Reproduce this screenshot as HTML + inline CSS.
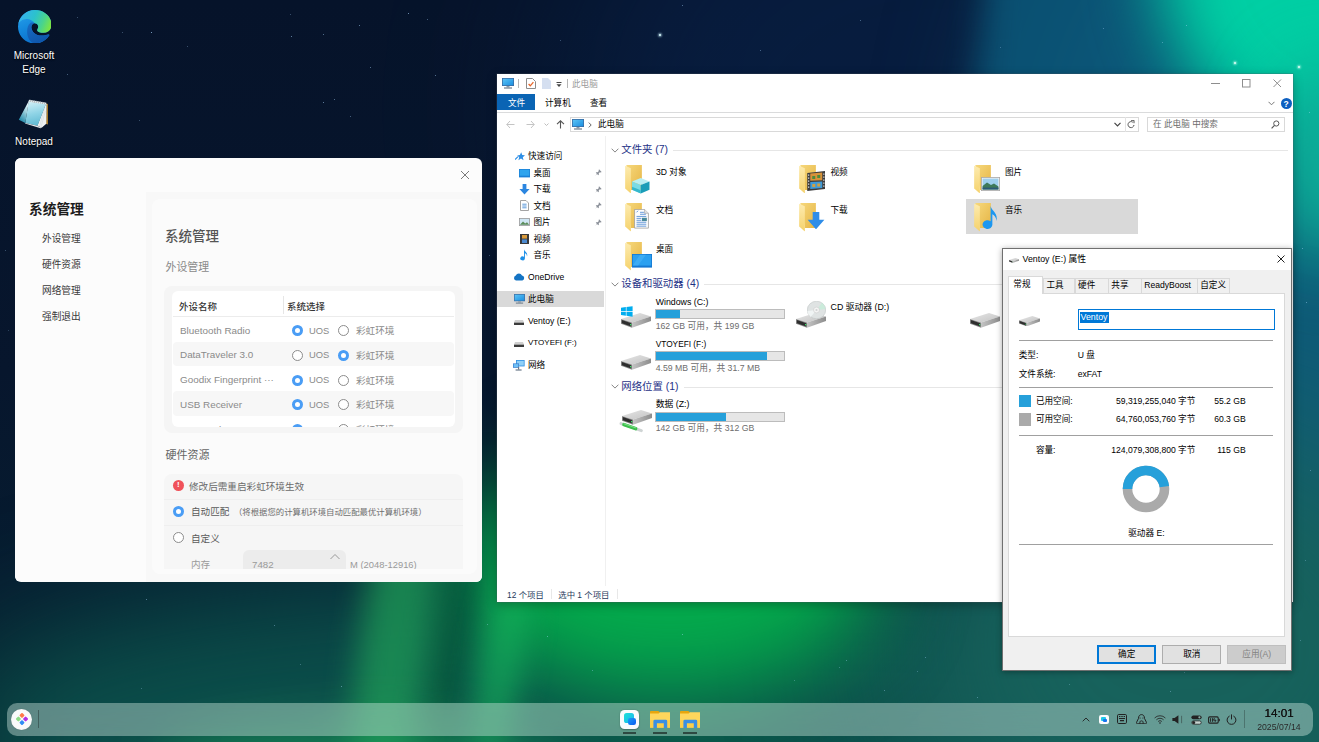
<!DOCTYPE html>
<html lang="zh-CN">
<head>
<meta charset="utf-8">
<title>Desktop</title>
<style>
*{box-sizing:border-box;margin:0;padding:0}
html,body{width:1319px;height:742px;overflow:hidden;background:#07152b}
body{position:relative;font-family:"Liberation Sans","Noto Sans CJK SC",sans-serif;font-size:10px;color:#000}
.abs{position:absolute}
.t{position:absolute;white-space:nowrap;line-height:1}
#bg{position:absolute;left:0;top:0;width:1319px;height:742px;overflow:hidden;
background:linear-gradient(to bottom,#06132a 0%,#07162d 50%,#061c30 78%,#06222f 100%)}
#bg i{position:absolute;display:block;border-radius:50%}

#uos{color:#333}
#uos .side{position:absolute;left:0;top:0;width:131px;height:423px;background:#fcfcfc}
#uos .main{position:absolute;left:131px;top:34px;width:337px;height:390px;background:#f8f8f8}
#uos .card{position:absolute;left:6px;top:7px;width:325px;height:375px;background:#fbfbfb;border-radius:8px}
#uos .m{font-size:9.7px;color:#3a3a3a;left:27px;margin-top:2px}
.rd{position:absolute;width:11px;height:11px;border-radius:50%;border:1px solid #8c8c8c;background:#fff}
.rd.on{border:3px solid #4a9df5;background:#fff}
.row{position:absolute;left:1px;width:281px;height:24.6px;border-radius:4px}
.row.alt{background:#f7f7f7}
.row .t{top:9px;font-size:9.6px;color:#8a8a8a}
.row .rd{top:8px}
.row .l{font-size:9.9px;top:8.5px}

#exp{font-size:9px;color:#000}
#exp .t{font-size:9px}
#exp .sb{left:31px;color:#000}
#exp .h{font-size:10.4px;color:#1e3287;margin-top:1.2px}
#exp .g{color:#6d6d6d;font-size:8.7px}
.bar{position:absolute;height:10px;border:1px solid #bcbcbc;background:#e6e6e6;width:130px}
.bar b{position:absolute;left:0;top:0;height:8px;background:#26a0da}
.hl{position:absolute;height:1px;background:#e6e6e6}

#prop{font-size:8.6px;color:#000}
#prop .t{font-size:8.6px}
#prop .tab{position:absolute;top:29px;height:15px;border:1px solid #d9d9d9;border-bottom:none;background:#f0f0f0}
#prop .sep{position:absolute;left:15.7px;width:254.5px;height:1px;background:#a0a0a0}
#prop .btn{position:absolute;top:395.5px;height:19px;width:59px;border:1px solid #adadad;background:#e1e1e1}
#expb .t{margin-top:.7px}
#expb .h{margin-top:1.3px}
</style>
</head>
<body>
<div id="bg">
<i style="left:560px;top:-200px;width:760px;height:620px;background:#0a2a5c;filter:blur(90px);opacity:.4"></i>
<i style="left:1020px;top:-120px;width:460px;height:900px;background:#0e5a78;filter:blur(70px);border-radius:40%"></i><i style="left:983px;top:-90px;width:400px;height:230px;background:#0b5779;filter:blur(16px);border-radius:10%;transform:skewX(-6deg);opacity:.85"></i>
<i style="left:1160px;top:-250px;width:360px;height:400px;background:#00cfa4;filter:blur(34px);transform:rotate(12deg)"></i><i style="left:1270px;top:60px;width:120px;height:200px;background:#0cae98;filter:blur(34px)"></i>
<i style="left:-40px;top:575px;width:1460px;height:330px;background:#0b4e4a;filter:blur(60px);border-radius:40%"></i>
<i style="left:900px;top:420px;width:560px;height:460px;background:#17625c;filter:blur(80px)"></i>
<i style="left:460px;top:440px;width:420px;height:256px;background:#04aa4c;filter:blur(42px)"></i><i style="left:425px;top:560px;width:40px;height:200px;background:#075a3c;filter:blur(14px);transform:rotate(8deg);opacity:.8"></i><i style="left:478px;top:560px;width:46px;height:200px;background:#18c060;filter:blur(14px);transform:rotate(9deg);opacity:.55"></i>
<i style="left:360px;top:430px;width:70px;height:420px;background:#20a058;filter:blur(15px);transform:rotate(7deg);opacity:.7"></i>
<i style="left:150px;top:722px;width:420px;height:90px;background:#1c9a58;filter:blur(24px);opacity:.6"></i>
<b class="abs" style="left:0;top:0;width:1.3px;height:1.3px;border-radius:50%;box-shadow:151px 32px 0 0 rgba(170,215,255,0.90),291px 36px 0 0 rgba(170,215,255,0.70),323px 34px 0 0 rgba(170,215,255,0.60),359px 25px 0 0 rgba(170,215,255,0.70),408px 13px 0 0 rgba(170,215,255,0.80),370px 67px 0 0 rgba(170,215,255,0.60),435px 75px 0 0 rgba(170,215,255,0.60),323px 102px 0 0 rgba(170,215,255,0.70),334px 99px 0 0 rgba(170,215,255,0.60),350px 116px 0 0 rgba(170,215,255,0.50),187px 46px 0 0 rgba(170,215,255,0.40),67px 74px 0 0 rgba(170,215,255,0.50),139px 120px 0 0 rgba(170,215,255,0.40),682px 5px 0 0 rgba(170,215,255,0.60),290px 14px 0 0 rgba(170,215,255,0.40),427px 19px 0 0 rgba(170,215,255,0.50),77px 17px 0 0 rgba(170,215,255,0.40),122px 32px 0 0 rgba(170,215,255,0.40),1186px 25px 0 0 rgba(170,215,255,0.60),1162px 42px 0 0 rgba(170,215,255,0.50),1103px 28px 0 0 rgba(170,215,255,0.50),1309px 112px 0 0 rgba(170,215,255,0.60),146px 599px 0 0 rgba(170,215,255,0.60),274px 625px 0 0 rgba(170,215,255,0.50),341px 686px 0 0 rgba(170,215,255,0.60),547px 636px 0 0 rgba(170,215,255,0.60),592px 670px 0 0 rgba(170,215,255,0.50),487px 624px 0 0 rgba(170,215,255,0.50),300px 664px 0 0 rgba(170,215,255,0.40),141px 688px 0 0 rgba(170,215,255,0.40),682px 634px 0 0 rgba(170,215,255,0.60),925px 657px 0 0 rgba(170,215,255,0.50),846px 660px 0 0 rgba(170,215,255,0.50),839px 667px 0 0 rgba(170,215,255,0.40),917px 671px 0 0 rgba(170,215,255,0.40),794px 680px 0 0 rgba(170,215,255,0.40),884px 690px 0 0 rgba(170,215,255,0.50),977px 697px 0 0 rgba(170,215,255,0.50),1170px 691px 0 0 rgba(170,215,255,0.50),1184px 672px 0 0 rgba(170,215,255,0.40),1069px 684px 0 0 rgba(170,215,255,0.40),560px 40px 0 0 rgba(170,215,255,0.40),760px 50px 0 0 rgba(170,215,255,0.50),905px 75px 0 0 rgba(170,215,255,0.40),860px 20px 0 0 rgba(170,215,255,0.50),1000px 47px 0 0 rgba(170,215,255,0.40),5px 250px 0 0 rgba(170,215,255,0.40),8px 330px 0 0 rgba(170,215,255,0.30),1302px 248px 0 0 rgba(170,215,255,0.60),1306px 302px 0 0 rgba(170,215,255,0.60),1310px 470px 0 0 rgba(170,215,255,0.50),1305px 560px 0 0 rgba(170,215,255,0.40),1300px 640px 0 0 rgba(170,215,255,0.40),489px 255px 0 0 rgba(170,215,255,0.40)"></b><b class="abs" style="left:659px;top:34px;width:2px;height:2px;background:#dff;border-radius:50%;box-shadow:0 0 2px 1px rgba(200,240,255,.6)"></b><b class="abs" style="left:1234px;top:62px;width:2px;height:2px;background:#dffff4;border-radius:50%;box-shadow:0 0 2px 1px rgba(200,255,240,.6)"></b><b class="abs" style="left:1298px;top:66px;width:2px;height:2px;background:#dffff4;border-radius:50%;box-shadow:0 0 2px 1px rgba(200,255,240,.6)"></b>
</div>

<svg width="0" height="0" style="position:absolute">
<defs>
<linearGradient id="gFb" x1="0" y1="0" x2="1" y2="1"><stop offset="0" stop-color="#f6d87c"/><stop offset="1" stop-color="#e6b545"/></linearGradient>
<linearGradient id="gFf" x1="0" y1="0" x2="0" y2="1"><stop offset="0" stop-color="#fdebaf"/><stop offset="1" stop-color="#f5d26c"/></linearGradient>
<linearGradient id="gDr" x1="0" y1="0" x2="1" y2="0"><stop offset="0" stop-color="#c4c4c4"/><stop offset="1" stop-color="#8c8c8c"/></linearGradient>
<linearGradient id="gDt" x1="0" y1="0" x2="1" y2="1"><stop offset="0" stop-color="#e6e6e6"/><stop offset="1" stop-color="#c2c2c2"/></linearGradient>
<linearGradient id="gPc" x1="0" y1="0" x2="1" y2="1"><stop offset="0" stop-color="#5cc3f5"/><stop offset="1" stop-color="#1c8fe0"/></linearGradient>
<symbol id="folder" viewBox="0 0 17 29"><path d="M1.2 0H17V25.5H6Z" fill="url(#gFb)"/><path d="M0 0.8L5.8 3.2V29L0 23.8Z" fill="url(#gFf)"/></symbol>
<symbol id="drive" viewBox="0 0 30 15"><path d="M0 6L19 0L30 3.4L11 9.6Z" fill="url(#gDt)"/><path d="M0 6L11 9.6V14.8L0 10.8Z" fill="#8a8a8a"/><path d="M0.9 7.1L10.2 10.2V13.6L0.9 10.2Z" fill="#2e2e2e"/><path d="M11 9.6L30 3.4V7.9L11 14.8Z" fill="url(#gDr)"/><rect x="9" y="11" width="1.3" height="1.3" fill="#3fe06a"/></symbol>
<symbol id="pc" viewBox="0 0 12 11"><rect x="0" y="0" width="12" height="8" fill="#3a6ea5"/><rect x="0.8" y="0.8" width="10.4" height="6.4" fill="url(#gPc)"/><rect x="4.5" y="8" width="3" height="1.4" fill="#8e9aa6"/><rect x="2" y="9.4" width="8" height="1.2" fill="#6f7f8f"/></symbol>
<symbol id="pin" viewBox="0 0 8 8"><path d="M4.6 0.4L7.6 3.4L6.6 3.9L5.6 3.6L4.3 4.9L4.4 6.6L3.6 7.1L2.4 5.6L0.4 7.6L2.1 5.3L0.9 4.4L1.4 3.6L3.1 3.7L4.4 2.4L4.1 1.4Z" fill="#8a8f98"/></symbol>
</defs></svg>
<!-- DESKTOP ICONS -->
<div id="desk">
<svg class="abs" style="left:17.8px;top:9.6px" width="33.6" height="33.7" viewBox="0 0 33.6 33.7">
<defs><linearGradient id="e0" x1="0" y1="0" x2=".4" y2="1"><stop offset="0" stop-color="#2aa4ee"/><stop offset=".55" stop-color="#1488dc"/><stop offset="1" stop-color="#0c70cc"/></linearGradient>
<linearGradient id="e1" x1="0" y1=".3" x2="1" y2=".6"><stop offset="0" stop-color="#36b0f2"/><stop offset=".45" stop-color="#2cc2cc"/><stop offset=".75" stop-color="#4ad48c"/><stop offset="1" stop-color="#7ce444"/></linearGradient>
<linearGradient id="e2" x1="0" y1="0" x2=".6" y2="1"><stop offset="0" stop-color="#186cc4"/><stop offset="1" stop-color="#0e55aa"/></linearGradient></defs>
<path d="M17 0C26.4 0 33.6 6.8 33.6 15C33.6 19.6 30 22.8 25.6 22.8C22.4 22.8 19.6 21.8 19.2 20.4C19 19.2 20.4 18.4 20.2 16.4C20 14.4 18.4 13.2 16.8 13.2C14.6 13.2 13.2 15.2 13.4 17.8C13.8 22.2 18 25.6 23 25.6C26 25.6 28.6 25 30.6 24.6C31.2 24.5 31.6 25 31.2 25.6C28.4 30.4 23 33.6 17 33.6C7.6 33.6 0 26 0 16.8C0 7.6 7.6 0 17 0Z" fill="url(#e0)"/>
<path d="M.4 14C1.6 6 8.6 0 17 0C26.4 0 33.6 6.8 33.6 15C33.6 19.6 30 22.8 25.6 22.8C22.4 22.8 19.6 21.8 19.2 20.4C19 19.2 20.4 18.4 20.2 16.4C20 14.4 18.4 13.2 16.8 13.2C15 10.4 11.6 8.8 8.6 8.9C5 9 1.6 11 .4 14Z" fill="url(#e1)"/>
<path d="M16.8 13.2C15 12.4 13.4 12.4 12.4 13C10 14.6 9 18.4 9.1 22.2C9.3 27 11.6 31.4 15 32.9C17 33.5 19.6 33.4 22 32.6C26 31.3 29.4 28.6 31.2 25.6C31.6 25 31.2 24.5 30.6 24.6C28.6 25 26 25.6 23 25.6C18 25.6 13.8 22.2 13.4 17.8C13.2 15.2 14.6 13.2 16.8 13.2Z" fill="url(#e2)"/>
</svg>
<div class="t" style="left:4px;top:50.5px;width:60px;text-align:center;font-size:10px;color:#fff;text-shadow:0 1px 1.5px rgba(0,0,0,.9),0 0 1px rgba(0,0,0,.7)">Microsoft</div>
<div class="t" style="left:4px;top:64.7px;width:60px;text-align:center;font-size:10px;color:#fff;text-shadow:0 1px 1.5px rgba(0,0,0,.9),0 0 1px rgba(0,0,0,.7)">Edge</div>
<svg class="abs" style="left:18px;top:99px" width="31" height="30" viewBox="0 0 31 30">
<defs><linearGradient id="n1" x1=".3" y1="0" x2=".5" y2="1"><stop offset="0" stop-color="#cdeef6"/><stop offset=".5" stop-color="#8fd4e6"/><stop offset="1" stop-color="#5fb9d2"/></linearGradient>
<linearGradient id="n2" x1=".7" y1="0" x2=".3" y2="1"><stop offset="0" stop-color="#f2fafc"/><stop offset=".45" stop-color="#9ccfdc"/><stop offset="1" stop-color="#1d86a6"/></linearGradient></defs>
<path d="M28.5 4.2L29.9 5.2V25.6L28.2 24.9Z" fill="#c48c2a"/>
<path d="M28 4.6L28.6 5.2L28.3 24.8L23.7 28.7L19.4 26.6Z" fill="#eef1f2"/>
<path d="M26.6 9L21.6 27.4M27.4 12L23 28" stroke="#cfd6d8" stroke-width=".5"/>
<path d="M10.6 2.6L28 4.8L19.6 26.7L7.3 23.9Z" fill="url(#n1)"/>
<path d="M11 1.4L10.2 6L7.3 23.9L.8 20.7Z" fill="url(#n2)"/>
<path d="M7.3 23.9L19.6 26.7L23.7 28.7L22.6 29.2L7 24.6Z" fill="#e4e9ea"/>
<path d="M11 .8L28.4 3.8L28 5.4L10.6 2.8Z" fill="#e6ecee"/>
<path d="M12.4 .7V2.9M14.4 1V3.2M16.4 1.4V3.6M18.4 1.7V3.9M20.4 2.1V4.3M22.4 2.4V4.6M24.4 2.8V5M26.4 3.1V5.3" stroke="#98a4a8" stroke-width=".7"/>
</svg>
<div class="t" style="left:4px;top:137.3px;width:60px;text-align:center;font-size:10px;color:#fff;text-shadow:0 1px 1.5px rgba(0,0,0,.9),0 0 1px rgba(0,0,0,.7)">Notepad</div>
</div>

<!-- UOS WINDOW -->
<div id="uos" class="abs" style="left:15px;top:158px;width:467.3px;height:423.7px;background:#fcfcfc;border-radius:6px;overflow:hidden">
<div class="side">
<div class="t" style="left:14px;top:44.8px;font-size:13.7px;font-weight:bold;color:#1c1c1c">系统管理</div>
<div class="t m" style="top:74px">外设管理</div>
<div class="t m" style="top:100px">硬件资源</div>
<div class="t m" style="top:126px">网络管理</div>
<div class="t m" style="top:152px">强制退出</div>
</div>
<svg class="abs" style="left:445px;top:12px" width="10" height="10" viewBox="0 0 10 10"><path d="M1 1L9 9M9 1L1 9" stroke="#7a7a7a" stroke-width="1" fill="none"/></svg>
<div class="main"><div class="card">
<div class="t" style="left:13px;top:31px;font-size:13.5px;color:#555;font-weight:500">系统管理</div>
<div class="t" style="left:13.5px;top:62.5px;font-size:10.9px;color:#8a8a8a">外设管理</div>
<div class="abs" style="left:12px;top:87px;width:299px;height:147px;background:#f5f5f5;border-radius:8px"></div>
<div class="abs" id="tbl" style="left:20px;top:92px;width:283px;height:136px;background:#fff;border-radius:6px;overflow:hidden">
<div class="t" style="left:7px;top:10.5px;font-size:9.5px;color:#333;font-weight:500">外设名称</div>
<div class="t" style="left:115px;top:10.5px;font-size:9.5px;color:#333;font-weight:500">系统选择</div>
<div class="abs" style="left:111px;top:5px;width:1px;height:18px;background:#e6e6e6"></div>
<div class="abs" style="left:1px;top:25px;width:281px;height:1px;background:#ececec"></div>
<div class="row" style="top:26px"><span class="t l" style="left:7px">Bluetooth Radio</span><b class="rd on" style="left:119px;"></b><span class="t l" style="left:136px;font-size:9.4px">UOS</span><b class="rd" style="left:165px;"></b><span class="t" style="left:183px">彩虹环境</span></div>
<div class="row alt" style="top:50.8px"><span class="t l" style="left:7px">DataTraveler 3.0</span><b class="rd" style="left:119px;"></b><span class="t l" style="left:136px;font-size:9.4px">UOS</span><b class="rd on" style="left:165px;"></b><span class="t" style="left:183px">彩虹环境</span></div>
<div class="row" style="top:75.6px"><span class="t l" style="left:7px">Goodix Fingerprint ···</span><b class="rd on" style="left:119px;"></b><span class="t l" style="left:136px;font-size:9.4px">UOS</span><b class="rd" style="left:165px;"></b><span class="t" style="left:183px">彩虹环境</span></div>
<div class="row alt" style="top:100.4px"><span class="t l" style="left:7px">USB Receiver</span><b class="rd on" style="left:119px;"></b><span class="t l" style="left:136px;font-size:9.4px">UOS</span><b class="rd" style="left:165px;"></b><span class="t" style="left:183px">彩虹环境</span></div>
<div class="row" style="top:125.2px"><span class="t l" style="left:17px">VIA Labs, Inc.</span><b class="rd on" style="left:119px;"></b><span class="t l" style="left:136px;font-size:9.4px">UOS</span><b class="rd" style="left:165px;"></b><span class="t" style="left:183px">彩虹环境</span></div>
</div>
<div class="t" style="left:13.5px;top:250.5px;font-size:11px;color:#666">硬件资源</div>
<div class="abs" id="hw" style="left:12px;top:275px;width:299px;height:95px;background:#f6f6f6;border-radius:8px 8px 0 0;overflow:hidden">
<div class="abs" style="left:0;top:25px;width:299px;height:1px;background:#efefef"></div>
<div class="abs" style="left:0;top:51px;width:299px;height:1px;background:#efefef"></div>
<div class="abs" style="left:9px;top:6px;width:11px;height:11px;border-radius:50%;background:#f0525a"></div>
<div class="t" style="left:13px;top:7px;font-size:8px;color:#fff;font-weight:bold">!</div>
<div class="t" style="left:25px;top:8px;font-size:9.6px;color:#6a6a6a">修改后需重启彩虹环境生效</div>
<b class="rd on" style="left:9px;top:32px"></b>
<div class="t" style="left:27px;top:33px;font-size:9.6px;color:#5a5a5a">自动匹配</div>
<div class="t" style="left:70px;top:34px;font-size:8.4px;color:#6e6e6e">（将根据您的计算机环境自动匹配最优计算机环境）</div>
<b class="rd" style="left:9px;top:58px"></b>
<div class="t" style="left:27px;top:60px;font-size:9.6px;color:#5a5a5a">自定义</div>
<div class="t" style="left:27px;top:85.5px;font-size:9.6px;color:#9a9a9a">内存</div>
<div class="abs" style="left:79px;top:76px;width:103px;height:40px;background:#ececec;border-radius:6px"></div>
<div class="t" style="left:88px;top:86px;font-size:9.7px;color:#9a9a9a">7482</div>
<svg class="abs" style="left:165px;top:79px" width="12" height="8" viewBox="0 0 12 8"><path d="M1.5 6L6 1.5L10.5 6" stroke="#999" stroke-width="1" fill="none"/></svg>
<div class="t" style="left:186px;top:86px;font-size:9.4px;color:#9a9a9a">M (2048-12916)</div>
</div>
</div></div>
</div>

<!-- EXPLORER WINDOW -->
<div id="exp" class="abs" style="left:497px;top:74px;width:796px;height:528px;background:#fff;overflow:hidden;box-shadow:0 0 0 .5px rgba(80,90,100,.5),0 3px 10px rgba(0,0,0,.28)">
<!-- titlebar -->
<svg class="abs" style="left:5px;top:4px" width="12" height="11"><use href="#pc"/></svg>
<div class="abs" style="left:21px;top:5px;width:1px;height:9px;background:#b5b5b5"></div>
<svg class="abs" style="left:29px;top:4px" width="10" height="11" viewBox="0 0 10 11"><path d="M0.5 0.5H6.5L9.5 3.5V10.5H0.5Z" fill="#fff" stroke="#8c8c8c" stroke-width="1"/><path d="M2.6 6L4.3 7.8L7.4 4.2" stroke="#e8682c" stroke-width="1.3" fill="none"/></svg>
<svg class="abs" style="left:45px;top:4px" width="9" height="11" viewBox="0 0 9 11"><path d="M0 0H6L9 3V11H0Z" fill="#d5dff0"/></svg>
<svg class="abs" style="left:59px;top:8px" width="6" height="6" viewBox="0 0 6 6"><rect x="0.5" y="0" width="5" height="1" fill="#444"/><path d="M0.5 2.2H5.5L3 5Z" fill="#444"/></svg>
<div class="abs" style="left:70px;top:5px;width:1px;height:9px;background:#b5b5b5"></div>
<div class="t" style="left:75px;top:5.5px;font-size:8.6px;color:#9a9a9a">此电脑</div>
<svg class="abs" style="left:714px;top:9px" width="9" height="1"><rect width="9" height="1" fill="#8e8e8e"/></svg>
<svg class="abs" style="left:745px;top:5px" width="9" height="9" viewBox="0 0 9 9"><rect x="0.5" y="0.5" width="7.5" height="7.5" fill="none" stroke="#8e8e8e" stroke-width="1"/></svg>
<svg class="abs" style="left:776px;top:5px" width="9" height="9" viewBox="0 0 9 9"><path d="M0.5 0.5L8 8M8 0.5L0.5 8" stroke="#8e8e8e" stroke-width="1" fill="none"/></svg>
<!-- ribbon tabs -->
<div class="abs" style="left:0;top:20px;width:38px;height:16px;background:#0a64b4"></div>
<div class="t" style="left:11px;top:25.3px;color:#fff;font-size:8.6px">文件</div>
<div class="t" style="left:48px;top:25.3px;font-size:8.6px">计算机</div>
<div class="t" style="left:93px;top:25.3px;font-size:8.6px">查看</div>
<svg class="abs" style="left:771px;top:27px" width="7" height="5" viewBox="0 0 7 5"><path d="M0.5 0.8L3.5 3.8L6.5 0.8" stroke="#777" stroke-width="1" fill="none"/></svg>
<div class="abs" style="left:783.5px;top:24px;width:11px;height:11px;border-radius:50%;background:#0d5fc0"></div>
<div class="t" style="left:786.6px;top:25.5px;font-size:8.5px;font-weight:bold;color:#fff">?</div>
<div class="hl" style="left:0;top:38px;width:796px;background:#dadbdc"></div>
<!-- nav row -->
<svg class="abs" style="left:9px;top:46px" width="60" height="9" viewBox="0 0 60 9"><path d="M8.5 4.5H0.8M4 1L0.8 4.5L4 8" stroke="#c4c4c4" stroke-width="1" fill="none"/><path d="M20.5 4.5H28.2M25 1L28.2 4.5L25 8" stroke="#c4c4c4" stroke-width="1" fill="none"/><path d="M38.5 3.5L40.5 5.5L42.5 3.5" stroke="#bdbdbd" stroke-width="1" fill="none"/><path d="M54.5 8.6V0.9M51 4.2L54.5 0.8L58 4.2" stroke="#555" stroke-width="1.1" fill="none"/></svg>
<div class="abs" style="left:73px;top:42.5px;width:569px;height:15.5px;border:1px solid #d9d9d9;background:#fff"></div>
<svg class="abs" style="left:75px;top:45px" width="12" height="11"><use href="#pc"/></svg>
<svg class="abs" style="left:91px;top:48px" width="4" height="6" viewBox="0 0 4 6"><path d="M0.8 0.6L3.2 3L0.8 5.4" stroke="#555" stroke-width=".9" fill="none"/></svg>
<div class="t" style="left:101px;top:46px;font-size:8.6px">此电脑</div>
<svg class="abs" style="left:617px;top:48px" width="7" height="5" viewBox="0 0 7 5"><path d="M0.5 0.8L3.5 3.8L6.5 0.8" stroke="#444" stroke-width="1.2" fill="none"/></svg>
<div class="abs" style="left:627.5px;top:43px;width:1px;height:14.5px;background:#e3e3e3"></div>
<svg class="abs" style="left:630px;top:46px" width="8" height="9" viewBox="0 0 8 9"><path d="M5.8 2.2A3 3 0 1 0 7 5" stroke="#555" stroke-width="1" fill="none"/><path d="M4 0.3H7V3.2" stroke="#555" stroke-width="1" fill="none"/></svg>
<div class="abs" style="left:649.5px;top:42.5px;width:138.5px;height:15.5px;border:1px solid #d9d9d9;background:#fff"></div>
<div class="t" style="left:656px;top:46px;font-size:8.6px;color:#6d6d6d">在 此电脑 中搜索</div>
<svg class="abs" style="left:774px;top:46px" width="9" height="9" viewBox="0 0 9 9"><circle cx="5.3" cy="3.5" r="2.6" stroke="#555" stroke-width="1" fill="none"/><path d="M3.5 5.4L0.6 8.3" stroke="#555" stroke-width="1.2"/></svg>
<div id="expb">
<div class="abs" style="left:108px;top:62px;width:1px;height:450px;background:#f0f0f0"></div>
<div class="abs" style="left:0;top:217px;width:107px;height:16.3px;background:#d9d9d9"></div>
<div class="t" style="left:31px;top:77.4px;font-size:8.6px">快速访问</div>
<div class="t" style="left:36.5px;top:93.9px;font-size:8.6px">桌面</div>
<div class="t" style="left:36.5px;top:110.4px;font-size:8.6px">下载</div>
<div class="t" style="left:36.5px;top:127.1px;font-size:8.6px">文档</div>
<div class="t" style="left:36.5px;top:143.4px;font-size:8.6px">图片</div>
<div class="t" style="left:36.5px;top:159.9px;font-size:8.6px">视频</div>
<div class="t" style="left:36.5px;top:176.1px;font-size:8.6px">音乐</div>
<div class="t" style="left:31px;top:198.4px;font-size:8.6px">OneDrive</div>
<div class="t" style="left:31px;top:220.3px;font-size:8.6px">此电脑</div>
<div class="t" style="left:31px;top:242.6px;font-size:8.6px">Ventoy (E:)</div>
<div class="t" style="left:31px;top:264.7px;font-size:8px">VTOYEFI (F:)</div>
<div class="t" style="left:31px;top:286.5px;font-size:8.6px">网络</div>
<svg class="abs" style="left:98px;top:95.0px" width="7" height="7"><use href="#pin"/></svg>
<svg class="abs" style="left:98px;top:111.5px" width="7" height="7"><use href="#pin"/></svg>
<svg class="abs" style="left:98px;top:128.2px" width="7" height="7"><use href="#pin"/></svg>
<svg class="abs" style="left:98px;top:144.5px" width="7" height="7"><use href="#pin"/></svg>
<svg class="abs" style="left:17.5px;top:77.5px" width="10" height="9" viewBox="0 0 10 9"><path d="M6.2 0.2L7.2 3L10 3.3L7.8 5.2L8.5 8.2L6 6.6L3.4 8.2L4.2 5.3L2.2 3.4L4.9 3.1Z" fill="#2e8fe6"/><path d="M0 7.6L3 4.6" stroke="#2e8fe6" stroke-width="1.2"/></svg>
<svg class="abs" style="left:22px;top:94.5px" width="11" height="9" viewBox="0 0 11 9"><rect width="11" height="8.4" fill="#1a80d6"/><rect x=".7" y=".7" width="9.6" height="6" fill="#2fa4ee"/></svg>
<svg class="abs" style="left:22px;top:109.5px" width="11" height="11" viewBox="0 0 11 11"><path d="M3.6 0H7.4V5H10.6L5.5 10.6L0.4 5H3.6Z" fill="#2b86e0"/></svg>
<svg class="abs" style="left:23px;top:126.19999999999999px" width="9" height="11" viewBox="0 0 9 11"><path d="M0.5 0.5H6L8.5 3V10.5H0.5Z" fill="#fff" stroke="#9a9a9a" stroke-width=".9"/><path d="M2.3 4.2H6.6M2.3 6H6.6M2.3 7.8H6.6" stroke="#4c8fd6" stroke-width=".9"/></svg>
<svg class="abs" style="left:22px;top:144px" width="11" height="8" viewBox="0 0 11 8"><rect x=".4" y=".4" width="10.2" height="7.2" fill="#cfe6f4" stroke="#9a9a9a" stroke-width=".8"/><path d="M0.9 6.8L4 3.6L6.2 5.4L8 4.2L10.2 6.8Z" fill="#5b8c5a"/></svg>
<svg class="abs" style="left:23px;top:159.5px" width="9" height="10" viewBox="0 0 9 10"><rect width="9" height="10" fill="#3a3a3a"/><rect x="2" y="1" width="5" height="3.6" fill="#d89a3c"/><rect x="2" y="5.4" width="5" height="3.6" fill="#4c8ad0"/></svg>
<svg class="abs" style="left:23px;top:174.7px" width="9" height="12" viewBox="0 0 9 12"><path d="M4 0.2C4.6 2.6 8.2 3.6 7 7.4C7 5.2 5.6 4.4 4.9 4.2V9.6A2.3 2 0 1 1 4 7.8Z" fill="#1b8fe8"/></svg>
<svg class="abs" style="left:16px;top:199px" width="12" height="8" viewBox="0 0 12 8"><path d="M3 7.6A2.6 2.6 0 0 1 2.8 2.6A3.4 3.4 0 0 1 9 2.4A2.7 2.7 0 0 1 9.4 7.6Z" fill="#1474c4"/></svg>
<svg class="abs" style="left:16.5px;top:219.9px" width="11" height="10"><use href="#pc"/></svg>
<svg class="abs" style="left:17px;top:245.7px" width="10" height="5" viewBox="0 0 10 5"><path d="M1 0H9L10 2.6H0Z" fill="#d0d0d0"/><rect y="2.6" width="10" height="2.4" fill="#3c3c3c"/></svg>
<svg class="abs" style="left:17px;top:267.8px" width="10" height="5" viewBox="0 0 10 5"><path d="M1 0H9L10 2.6H0Z" fill="#d0d0d0"/><rect y="2.6" width="10" height="2.4" fill="#3c3c3c"/></svg>
<svg class="abs" style="left:16px;top:285.6px" width="12" height="11" viewBox="0 0 12 11"><rect x="3" y="0" width="8.6" height="6.4" fill="#2f8fe0"/><rect x="3.8" y=".8" width="7" height="4.8" fill="#8fd0f8"/><rect x="0" y="3.4" width="6" height="4.4" fill="#3a7fd0"/><rect x=".7" y="4.1" width="4.6" height="3" fill="#6fc0f4"/><rect x="5" y="7" width="1.2" height="2.6" fill="#6a7a8a"/><rect x="2.6" y="9.4" width="6" height="1.2" fill="#6a7a8a"/></svg>
<svg class="abs" style="left:113.5px;top:73.5px" width="8" height="5" viewBox="0 0 8 5"><path d="M0.6 0.7L4 4.1L7.4 0.7" stroke="#777" stroke-width=".9" fill="none"/></svg><div class="t h" style="left:124.3px;top:69.9px">文件夹 (7)</div><div class="hl" style="left:176px;top:76.0px;width:615px"></div>
<svg class="abs" style="left:113.5px;top:207.5px" width="8" height="5" viewBox="0 0 8 5"><path d="M0.6 0.7L4 4.1L7.4 0.7" stroke="#777" stroke-width=".9" fill="none"/></svg><div class="t h" style="left:124.3px;top:203.89999999999998px">设备和驱动器 (4)</div><div class="hl" style="left:207px;top:210.0px;width:584px"></div>
<svg class="abs" style="left:113.5px;top:310.2px" width="8" height="5" viewBox="0 0 8 5"><path d="M0.6 0.7L4 4.1L7.4 0.7" stroke="#777" stroke-width=".9" fill="none"/></svg><div class="t h" style="left:124.3px;top:306.59999999999997px">网络位置 (1)</div><div class="hl" style="left:186.6px;top:312.7px;width:604.4px"></div>
<div class="abs" style="left:469px;top:124.9px;width:171.6px;height:35.2px;background:#d9d9d9"></div>
<svg class="abs" style="left:128px;top:90.7px" width="17" height="28.5"><use href="#folder"/></svg>
<div class="t" style="left:159px;top:93.10000000000001px;font-size:8.6px">3D 对象</div>
<svg class="abs" style="left:135px;top:104px" width="17.5" height="15.5" viewBox="0 0 18 16"><path d="M0 3.6L9 0L18 3.6L9 7.2Z" fill="#b8eef2"/><path d="M0 3.6L9 7.2V16L0 12Z" fill="#7adbe6"/><path d="M9 7.2L18 3.6V12L9 16Z" fill="#1a9db8"/><path d="M0 9L9 12.6V16L0 12Z" fill="#36b8cc"/></svg>
<svg class="abs" style="left:302px;top:90.7px" width="17" height="28.5"><use href="#folder"/></svg>
<div class="t" style="left:333.5px;top:93.10000000000001px;font-size:8.6px">视频</div>
<svg class="abs" style="left:309.5px;top:96.8px" width="18.5" height="20" viewBox="0 0 18 20"><path d="M0 2L18 0V18L0 20Z" fill="#3c3c3c"/><path d="M3 2.6L15 1.4V9.2L3 9.8Z" fill="#d8923a"/><path d="M3 11L15 10.6V17L3 18Z" fill="#3e9ad8"/><path d="M5 5h3v3H5zM10 4h3v3h-3z" fill="#4c8a3c"/><path d="M5 13h3v3H5zM10 12.6h3v3h-3z" fill="#d0a040"/><path d="M.8 3.4h1.2v1.4H.8zM.8 6.4h1.2v1.4H.8zM.8 9.4h1.2v1.4H.8zM.8 12.4h1.2v1.4H.8zM.8 15.4h1.2v1.4H.8zM16 2.4h1.2v1.4H16zM16 5.4h1.2v1.4H16zM16 8.4h1.2v1.4H16zM16 11.4h1.2v1.4H16zM16 14.4h1.2v1.4H16z" fill="#e8e8e8"/></svg>
<svg class="abs" style="left:476.5px;top:90.7px" width="17" height="28.5"><use href="#folder"/></svg>
<div class="t" style="left:508px;top:93.10000000000001px;font-size:8.6px">图片</div>
<svg class="abs" style="left:484.3px;top:102.5px" width="19" height="14" viewBox="0 0 19 14"><rect x=".4" y=".4" width="18.2" height="13.2" fill="#f4f4f4" stroke="#a8a8a8" stroke-width=".8"/><rect x="1.6" y="1.6" width="15.8" height="10.8" fill="#9fd0ee"/><path d="M1.6 9L6 5.4L10 8L13 6.6L17.4 9.4V12.4H1.6Z" fill="#3e7a5a"/><path d="M1.6 10.6H17.4V12.4H1.6Z" fill="#2c5a78"/></svg>
<svg class="abs" style="left:128px;top:129.2px" width="17" height="28.5"><use href="#folder"/></svg>
<div class="t" style="left:159px;top:131.4px;font-size:8.6px">文档</div>
<svg class="abs" style="left:137px;top:135.3px" width="15" height="19.5" viewBox="0 0 15 20"><path d="M.4 .4H10.6L14.6 4.4V19.6H.4Z" fill="#fdfdfd" stroke="#9c9c9c" stroke-width=".8"/><path d="M10.6 .4V4.4H14.6" fill="#e4e4e4" stroke="#9c9c9c" stroke-width=".6"/><path d="M2.4 3.4L4 1.8M6 3.4h4M6 5.4h6M2.4 7.6h10M2.4 9.6h5M2.4 11.6h5M2.4 13.6h10M2.4 15.6h10M2.4 17.6h10" stroke="#3f7fd0" stroke-width=".8"/><rect x="8" y="9" width="5" height="3.4" fill="#4a8a9a"/></svg>
<svg class="abs" style="left:302px;top:129.2px" width="17" height="28.5"><use href="#folder"/></svg>
<div class="t" style="left:333.5px;top:131.4px;font-size:8.6px">下载</div>
<svg class="abs" style="left:309.8px;top:137.6px" width="18" height="17.5" viewBox="0 0 18 18"><path d="M5.6 0H12.4V8H17.6L9 17.8L.4 8H5.6Z" fill="#2f8de8"/></svg>
<svg class="abs" style="left:476.5px;top:129.2px" width="17" height="28.5"><use href="#folder"/></svg>
<div class="t" style="left:508px;top:131.4px;font-size:8.6px">音乐</div>
<svg class="abs" style="left:485.4px;top:131.8px" width="17" height="23.5" viewBox="0 0 17 24"><path d="M8.6 0C9.6 5 16.4 7 14.6 15.4C14.4 11 11.6 8.8 10.4 8.4V19.4A5 4.4 0 1 1 8.6 15.6Z" fill="#1d97f0"/></svg>
<svg class="abs" style="left:128px;top:168px" width="17" height="28.5"><use href="#folder"/></svg>
<div class="t" style="left:159px;top:169.9px;font-size:8.6px">桌面</div>
<svg class="abs" style="left:135px;top:179.6px" width="20" height="14" viewBox="0 0 20 14"><rect width="20" height="13.6" fill="#1478d2"/><rect x=".8" y=".8" width="18.4" height="10.8" fill="#2ba0f0"/><path d="M.8 11.6L8 .8H14L6 11.6Z" fill="#4ab4f6" opacity=".6"/></svg>
<div class="t" style="left:158.7px;top:223.0px;font-size:8.8px">Windows (C:)</div><div class="bar" style="left:158px;top:235px"><b style="width:24px"></b></div><div class="t g" style="left:158.7px;top:247.2px">162 GB 可用，共 199 GB</div>
<div class="t" style="left:158.7px;top:265.2px;font-size:8.3px">VTOYEFI (F:)</div><div class="bar" style="left:158px;top:276.9px"><b style="width:111px"></b></div><div class="t g" style="left:158.7px;top:289.5px">4.59 MB 可用，共 31.7 MB</div>
<div class="t" style="left:158.7px;top:325.4px;font-size:8.8px">数据 (Z:)</div><div class="bar" style="left:158px;top:337.6px"><b style="width:69.5px"></b></div><div class="t g" style="left:158.7px;top:349.6px">142 GB 可用，共 312 GB</div>
<div class="t" style="left:333.6px;top:228.8px;font-size:8.8px">CD 驱动器 (D:)</div>
<svg class="abs" style="left:123.8px;top:238.8px" width="30" height="15"><use href="#drive"/></svg>
<svg class="abs" style="left:124px;top:232px" width="11.6" height="10.8" viewBox="0 0 11 10"><path d="M0 1.6L4.6 .9V4.7H0ZM5.2 .8L11 0V4.7H5.2ZM0 5.3H4.6V9.1L0 8.4ZM5.2 5.3H11V10L5.2 9.2Z" fill="#00adef"/></svg>
<svg class="abs" style="left:123.8px;top:280.8px" width="30" height="15"><use href="#drive"/></svg>
<svg class="abs" style="left:124.5px;top:336.3px" width="30" height="15"><use href="#drive"/></svg>
<svg class="abs" style="left:122px;top:346.6px" width="25" height="12" viewBox="0 0 25 12"><path d="M2 2.6L22.4 9.6" stroke="#cfd4d4" stroke-width="3" stroke-linecap="round"/><path d="M5 3.6L16.6 7.6" stroke="#3cc04c" stroke-width="3.6" stroke-linecap="round"/><path d="M5 2.8L16.6 6.8" stroke="#7ee088" stroke-width="1" stroke-linecap="round"/></svg>
<svg class="abs" style="left:298.5px;top:238.6px" width="30" height="15"><use href="#drive"/></svg>
<svg class="abs" style="left:309.5px;top:226.5px" width="19" height="18" viewBox="0 0 19 18"><ellipse cx="9.5" cy="9" rx="9.2" ry="8.8" fill="#dfe3e3" stroke="#bfc4c4" stroke-width=".6"/><path d="M9.5 9L15 1.8A9 9 0 0 1 18.6 8Z" fill="#c6ecd8" opacity=".8"/><path d="M9.5 9L3.6 16A9 9 0 0 1 .4 10Z" fill="#f0f4f4"/><ellipse cx="9.5" cy="9" rx="3" ry="2.9" fill="#f4f4f4" stroke="#c4c4c4" stroke-width=".5"/><ellipse cx="9.5" cy="9" rx="1.1" ry="1" fill="#cfd2d2"/></svg>
<svg class="abs" style="left:473px;top:239px" width="30" height="15"><use href="#drive"/></svg>
<div class="t" style="left:10px;top:516.0px;font-size:8.4px;color:#1e395b">12 个项目</div>
<div class="t" style="left:61.3px;top:516.0px;font-size:8.4px;color:#1e395b">选中 1 个项目</div>
<div class="abs" style="left:53.5px;top:515px;width:1px;height:10px;background:#e8e8e8"></div>
<div class="abs" style="left:119.5px;top:515px;width:1px;height:10px;background:#e8e8e8"></div>
</div>
</div>

<!-- PROPERTIES DIALOG -->
<div id="prop" class="abs" style="left:1002px;top:248px;width:289.5px;height:422.5px;background:#f0f0f0;border:1px solid #707070;overflow:hidden;box-shadow:0 1px 6px rgba(0,0,0,.35)">
<div class="abs" style="left:0;top:0;width:288px;height:21.2px;background:#fff"></div>
<svg class="abs" style="left:6px;top:8.5px" width="10" height="5" viewBox="0 0 30 15"><use href="#drive"/></svg>
<div class="t" style="left:19.6px;top:5.700000000000001px;font-size:8.8px">Ventoy (E:) 属性</div>
<svg class="abs" style="left:273.5px;top:6px" width="8" height="8" viewBox="0 0 8 8"><path d="M0.5 0.5L7.5 7.5M7.5 0.5L0.5 7.5" stroke="#222" stroke-width="1" fill="none"/></svg>
<div class="abs" style="left:5px;top:43.5px;width:276.5px;height:344.1px;background:#fff;border:1px solid #d9d9d9"></div>
<div class="tab" style="left:39.8px;width:32.7px"></div>
<div class="t" style="left:39.8px;top:32.1px;width:31.7px;text-align:left;padding-left:3.6px">工具</div>
<div class="tab" style="left:71.5px;width:34.2px"></div>
<div class="t" style="left:71.5px;top:32.1px;width:33.2px;text-align:left;padding-left:3.6px">硬件</div>
<div class="tab" style="left:104.7px;width:33.9px"></div>
<div class="t" style="left:104.7px;top:32.1px;width:32.9px;text-align:left;padding-left:3.6px">共享</div>
<div class="tab" style="left:137.6px;width:57.0px"></div>
<div class="t" style="left:137.6px;top:32.1px;width:56.0px;text-align:left;padding-left:3.6px">ReadyBoost</div>
<div class="tab" style="left:193.6px;width:33.0px"></div>
<div class="t" style="left:193.6px;top:32.1px;width:32.0px;text-align:left;padding-left:3.6px">自定义</div>
<div class="abs" style="left:5px;top:27px;width:35.299999999999955px;height:17.5px;background:#fff;border:1px solid #d9d9d9;border-bottom:none"></div>
<div class="t" style="left:10.3px;top:30.9px">常规</div>
<svg class="abs" style="left:16.3px;top:66.8px" width="21" height="10.5" viewBox="0 0 30 15"><use href="#drive"/></svg>
<div class="abs" style="left:74.6px;top:60px;width:197.60000000000014px;height:20.600000000000023px;background:#fff;border:1px solid #0078d7"></div>
<div class="abs" style="left:76.8px;top:63px;width:29.299999999999955px;height:11.399999999999977px;background:#0078d7"></div>
<div class="t" style="left:77.6px;top:64.1px;color:#fff;font-size:8.8px">Ventoy</div>
<div class="sep" style="top:90.8px"></div>
<div class="sep" style="top:138.3px"></div>
<div class="sep" style="top:185.8px"></div>
<div class="sep" style="top:294.5px"></div>
<div class="t" style="left:15.7px;top:101.6px">类型:</div>
<div class="t" style="left:74.7px;top:101.6px">U 盘</div>
<div class="t" style="left:15.7px;top:120.6px">文件系统:</div>
<div class="t" style="left:74.7px;top:120.6px">exFAT</div>
<div class="abs" style="left:15.7px;top:145.7px;width:12.2px;height:12.8px;background:#26a0da"></div>
<div class="abs" style="left:15.7px;top:164.4px;width:12.2px;height:12.8px;background:#aaaaaa"></div>
<div class="t" style="left:32.9px;top:147.5px">已用空间:</div><div class="t" style="left:92.3px;top:147.5px;width:100px;text-align:right">59,319,255,040 字节</div><div class="t" style="left:182.7px;top:147.5px;width:60px;text-align:right">55.2 GB</div>
<div class="t" style="left:32.9px;top:165.9px">可用空间:</div><div class="t" style="left:92.3px;top:165.9px;width:100px;text-align:right">64,760,053,760 字节</div><div class="t" style="left:182.7px;top:165.9px;width:60px;text-align:right">60.3 GB</div>
<div class="t" style="left:32.9px;top:197.0px">容量:</div><div class="t" style="left:92.3px;top:197.0px;width:100px;text-align:right">124,079,308,800 字节</div><div class="t" style="left:182.7px;top:197.0px;width:60px;text-align:right">115 GB</div>
<svg class="abs" style="left:118.1px;top:214.9px" width="50" height="50" viewBox="-25 -25 50 50"><circle r="18.5" fill="none" stroke="#aaaaaa" stroke-width="9.6"/><path d="M-18.5 0A18.5 18.5 0 0 1 18.35 -2.32" fill="none" stroke="#26a0da" stroke-width="9.6"/></svg>
<div class="t" style="left:113.4px;top:279.8px;width:60px;text-align:center">驱动器 E:</div>
<div class="btn" style="left:94.2px;border:2px solid #0078d7"></div>
<div class="btn" style="left:159.3px"></div>
<div class="btn" style="left:224.2px;background:#cccccc;border-color:#bfbfbf"></div>
<div class="t" style="left:94.2px;top:400.6px;width:59px;text-align:center">确定</div>
<div class="t" style="left:159.3px;top:400.6px;width:59px;text-align:center">取消</div>
<div class="t" style="left:224.2px;top:400.6px;width:59px;text-align:center;color:#838383">应用(A)</div>
</div>

<!-- TASKBAR -->
<div id="bar" class="abs" style="left:7px;top:703px;width:1306px;height:33px;border-radius:10px;background:rgba(238,255,247,.37);backdrop-filter:blur(22px)">
<div class="abs" style="left:4.4px;top:5.8px;width:21px;height:21px;border-radius:50%;background:radial-gradient(circle,#fafafa 60%,#e4e8e8 100%);box-shadow:0 0 1px rgba(0,0,0,.3)"></div>
<svg class="abs" style="left:8px;top:9.3px" width="14" height="14" viewBox="-7 -7 14 14"><rect x="-2" y="-5.6" width="4" height="4" rx="1" transform="rotate(45 0 -3.6)" fill="#ff7848"/><rect x="-2" y="1.6" width="4" height="4" rx="1" transform="rotate(45 0 3.6)" fill="#2f8cf4"/><rect x="-5.6" y="-2" width="4" height="4" rx="1" transform="rotate(45 -3.6 0)" fill="#8edb86"/><rect x="1.6" y="-2" width="4" height="4" rx="1" transform="rotate(45 3.6 0)" fill="#b22fe6"/></svg>
<div class="abs" style="left:30.5px;top:7px;width:1px;height:18px;background:rgba(0,0,0,.3)"></div>
<div class="abs" style="left:613px;top:6.6px;width:19.2px;height:19.3px;border-radius:4.5px;background:#fafbfc;box-shadow:0 .5px 1.5px rgba(0,0,0,.3)"></div>
<div class="abs" style="left:616.8px;top:10.3px;width:9.8px;height:9.5px;border-radius:2.6px;background:linear-gradient(135deg,#1fe0d8,#19b4ee)"></div>
<div class="abs" style="left:621px;top:14.6px;width:8.2px;height:7.7px;border-radius:2.2px;background:linear-gradient(135deg,#1b9cf6,#0a5cf0)"></div>
<svg class="abs" style="left:642.5px;top:8px" width="20.5" height="17" viewBox="0 0 20.5 17"><path d="M0 .9A.9 .9 0 0 1 .9 0H8.4L10 1.6V3H0Z" fill="#e8a60e"/><path d="M0 2.6H8.6L10 1.2H20.5V16.8H0Z" fill="#ffd65c"/><path d="M0 9H20.5V16.8H0Z" fill="#fcc840" opacity=".6"/><path d="M3.4 17V10.2A1.4 1.4 0 0 1 4.8 8.8H15.8A1.4 1.4 0 0 1 17.2 10.2V17H13.8V12.3H6.9V17Z" fill="#3b8fe4"/></svg>
<svg class="abs" style="left:672.7px;top:8px" width="20.5" height="17" viewBox="0 0 20.5 17"><path d="M0 .9A.9 .9 0 0 1 .9 0H8.4L10 1.6V3H0Z" fill="#e8a60e"/><path d="M0 2.6H8.6L10 1.2H20.5V16.8H0Z" fill="#ffd65c"/><path d="M0 9H20.5V16.8H0Z" fill="#fcc840" opacity=".6"/><path d="M3.4 17V10.2A1.4 1.4 0 0 1 4.8 8.8H15.8A1.4 1.4 0 0 1 17.2 10.2V17H13.8V12.3H6.9V17Z" fill="#3b8fe4"/></svg>
<div class="abs" style="left:615.9px;top:29.2px;width:13.5px;height:1.6px;background:rgba(30,45,40,.75)"></div>
<div class="abs" style="left:646px;top:29.2px;width:13.8px;height:1.6px;background:rgba(30,45,40,.75)"></div>
<div class="abs" style="left:676px;top:29.2px;width:13.8px;height:1.6px;background:rgba(30,45,40,.75)"></div>
<svg class="abs" style="left:1075.1px;top:14.0px" width="8" height="5" viewBox="0 0 8 5"><path d="M0.7 4.3L4 1L7.3 4.3" stroke="#222" stroke-width=".9" fill="none"/></svg>
<div class="abs" style="left:1092.3px;top:11.8px;width:9.4px;height:9.4px;border-radius:2px;background:#fafbfc"></div>
<div class="abs" style="left:1094.2px;top:13.5px;width:4.4px;height:4.2px;border-radius:1px;background:#1fc8e8"></div>
<div class="abs" style="left:1096.3px;top:15.5px;width:4px;height:3.8px;border-radius:1px;background:#1473f0"></div>
<svg class="abs" style="left:1110px;top:11px" width="10" height="10" viewBox="0 0 10 10"><rect x=".5" y=".5" width="9" height="9" rx="1.2" fill="none" stroke="#222" stroke-width="1"/><path d="M2 2h1.4v1H2zM4.3 2h1.4v1H4.3zM6.6 2h1.4v1H6.6zM2 4h6v1H2zM3 6h4v1.2H3z" fill="#222"/></svg>
<svg class="abs" style="left:1128.6px;top:11px" width="11" height="10.4" viewBox="0 0 11 10.4"><path d="M1.4 9.8C.5 9.8 .3 9 .7 8L2.5 4.4C2.5 2 3.7 .6 5.5 .6C7.3 .6 8.5 2 8.5 4.4L10.3 8C10.7 9 10.5 9.8 9.6 9.8Z" fill="none" stroke="#222" stroke-width="1"/><path d="M3.9 9.8V7.9C3.9 6.5 7.1 6.5 7.1 7.9V9.8" fill="none" stroke="#222" stroke-width=".9"/><path d="M4.1 3.6v1M6.9 3.6v1" stroke="#222" stroke-width=".9"/></svg>
<svg class="abs" style="left:1147.1px;top:12.0px" width="12" height="9" viewBox="0 0 12 9"><path d="M.6 3A7.6 7.6 0 0 1 11.4 3M2.4 4.8A5 5 0 0 1 9.6 4.8M4.1 6.5A2.7 2.7 0 0 1 7.9 6.5" stroke="#222" stroke-width=".8" fill="none"/><circle cx="6" cy="8" r=".8" fill="#222"/></svg>
<svg class="abs" style="left:1165.4px;top:12.0px" width="11" height="9" viewBox="0 0 11 9"><path d="M.4 3H2.6L6.4 .2V8.8L2.6 6H.4Z" fill="#222"/><path d="M9.6 .8V8.2" stroke="#222" stroke-width=".8" opacity=".55"/></svg>
<svg class="abs" style="left:1183.5px;top:11.5px" width="11" height="10" viewBox="0 0 11 10"><rect x=".4" y=".4" width="10.2" height="3.8" rx="1.9" fill="#222"/><circle cx="8.4" cy="2.3" r="1.1" fill="#8fb0a8"/><rect x=".8" y="5.9" width="9.4" height="3.3" rx="1.65" fill="#c8d6d2" stroke="#222" stroke-width=".8"/><circle cx="2.7" cy="7.55" r="1.5" fill="#222"/></svg>
<svg class="abs" style="left:1200.5px;top:12.5px" width="12" height="8" viewBox="0 0 12 8"><rect x=".6" y=".9" width="9.6" height="6.2" rx="1" fill="none" stroke="#222" stroke-width="1.1"/><rect x="10.6" y="2.8" width="1.2" height="2.4" fill="#222"/><path d="M2.6 2.2V5.8M4.6 2.2V5.8M6.4 2.2L5.6 4.2H8L7 5.8" stroke="#222" stroke-width="1" fill="none"/></svg>
<svg class="abs" style="left:1219.3px;top:10.8px" width="11" height="11" viewBox="0 0 11 11"><path d="M3.6 2A4.4 4.4 0 1 0 7.4 2" stroke="#222" stroke-width="1" fill="none"/><path d="M5.5 .4V5.4" stroke="#222" stroke-width="1"/></svg>
<div class="abs" style="left:1237.4px;top:6.7px;width:1px;height:18px;background:rgba(0,0,0,.25)"></div>
<div class="t" style="left:1242.2px;top:3.7px;width:60px;text-align:center;font-size:11.7px;color:#111;text-shadow:0 0 .4px #111">14:01</div>
<div class="t" style="left:1241.9px;top:19.6px;width:60px;text-align:center;font-size:8.7px;color:#2a2a2a">2025/07/14</div>
</div>

</body>
</html>
